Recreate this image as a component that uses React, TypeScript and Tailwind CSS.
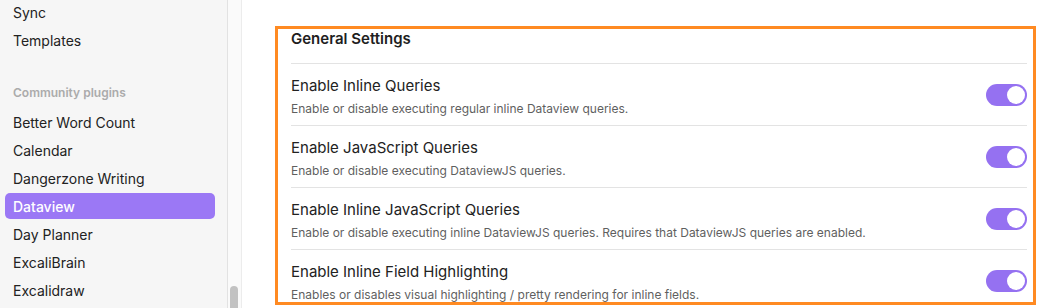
const sidebarTop = ["Sync", "Templates"];
const community = [
  "Better Word Count",
  "Calendar",
  "Dangerzone Writing",
  "Dataview",
  "Day Planner",
  "ExcaliBrain",
  "Excalidraw",
];

const settings = [
  {
    name: "Enable Inline Queries",
    desc: "Enable or disable executing regular inline Dataview queries.",
  },
  {
    name: "Enable JavaScript Queries",
    desc: "Enable or disable executing DataviewJS queries.",
  },
  {
    name: "Enable Inline JavaScript Queries",
    desc: "Enable or disable executing inline DataviewJS queries. Requires that DataviewJS queries are enabled.",
  },
  {
    name: "Enable Inline Field Highlighting",
    desc: "Enables or disables visual highlighting / pretty rendering for inline fields.",
  },
];

function NavItem({ label, active }: { label: string; active?: boolean }) {
  return (
    <div
      className={
        active
          ? "h-[26px] mb-[2px] px-2 flex items-center rounded-[5px] bg-[#9b78f5] text-white font-medium"
          : "h-[26px] mb-[2px] px-2 flex items-center text-[#222222]"
      }
    >
      {label}
    </div>
  );
}

function Toggle() {
  return (
    <div className="w-[41px] h-[22px] rounded-full bg-[#9571f1] flex items-center justify-end px-[2px] shrink-0">
      <div className="w-[18px] h-[18px] rounded-full bg-white" />
    </div>
  );
}

export default function App() {
  return (
    <div
      className="flex w-[1048px] h-[308px] overflow-hidden bg-white"
      style={{ fontFamily: "Inter, 'Noto Sans', sans-serif" }}
    >
      {/* sidebar */}
      <aside className="w-[228px] shrink-0 bg-[#f6f6f6] border-r border-[#e2e2e2] text-[14px]">
        <div className="mt-[-1px] pl-[5px] pr-[12px]">
          {sidebarTop.map((s) => (
            <NavItem key={s} label={s} />
          ))}
          <div className="mt-[32px] mb-[8px] h-[16px] px-2 flex items-center text-[12px] font-semibold text-[#ababab]">
            Community plugins
          </div>
          {community.map((s) => (
            <NavItem key={s} label={s} active={s === "Dataview"} />
          ))}
        </div>
      </aside>

      {/* scrollbar track */}
      <div className="w-[14px] shrink-0 bg-[#fafafa] border-r border-[#ececec] flex flex-col">
        <div className="flex-1" />
        <div className="ml-[2px] w-[8px] h-[22px] rounded-t-full bg-[#c2c2c2]" />
      </div>

      {/* main */}
      <main className="flex-1 pl-[33px] pt-[26px]">
        <div className="w-[761px] h-[279px] overflow-hidden border-[3px] border-[#ff8a22] pl-[13px] pr-[6px]">
          <div className="h-[34px] text-[15px] leading-[20px] font-semibold text-[#1e1e1e]">
            General Settings
          </div>
          {settings.map((s) => (
            <div
              key={s.name}
              className="flex items-center justify-between border-t border-[#e3e3e3]"
            >
              <div className="pt-[12px] pb-[8px]">
                <div className="text-[15px] leading-[20px] text-[#222222]">{s.name}</div>
                <div className="mt-[4px] text-[12px] leading-[17px] text-[#5f5f5f]">{s.desc}</div>
              </div>
              <Toggle />
            </div>
          ))}
        </div>
      </main>
    </div>
  );
}
